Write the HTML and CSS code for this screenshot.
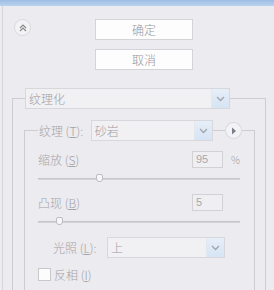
FILE: index.html
```html
<!DOCTYPE html>
<html>
<head>
<meta charset="utf-8">
<link rel="stylesheet" href="styles.css">
</head>
<body>
<div class="topbar"></div>
<div class="panel">
  <div class="head">
    <div class="circle up">
      <svg width="8" height="8" viewBox="0 0 8 8"><path d="M1 4 L4 1 L7 4 M1 7 L4 4 L7 7" fill="none" stroke="#8a8a8a" stroke-width="1.2"/></svg>
    </div>
    <div class="btns">
      <div class="btn">确定</div>
      <div class="btn">取消</div>
    </div>
  </div>

  <div class="group outer">
    <div class="ghead">
      <div class="seg segl"></div>
      <div class="select sel-main"><span class="val">纹理化</span><span class="arrow"><svg width="9" height="6" viewBox="0 0 9 6"><path d="M1 1 L4.5 4.5 L8 1" fill="none" stroke="#a0a4aa" stroke-width="1.3"/></svg></span></div>
      <div class="seg segr"></div>
    </div>
    <div class="gbody outer-body">
      <div class="group inner">
        <div class="ghead ihead">
          <div class="seg segl s-in"></div>
          <span class="lbl tex-lbl">纹理 (<u>T</u>):</span>
          <div class="select sel-tex"><span class="val">砂岩</span><span class="arrow"><svg width="9" height="6" viewBox="0 0 9 6"><path d="M1 1 L4.5 4.5 L8 1" fill="none" stroke="#a0a4aa" stroke-width="1.3"/></svg></span></div>
          <div class="seg s-mid"></div>
          <div class="circle play"><svg width="6" height="8" viewBox="0 0 6 8"><path d="M1 0.5 L5 4 L1 7.5 Z" fill="#7a7e88"/></svg></div>
          <div class="seg segr s-end"></div>
        </div>
        <div class="gbody inner-body">
          <div class="row">
            <span class="lbl">缩放 (<u>S</u>)</span>
            <span class="num">95</span>
            <span class="pct">%</span>
          </div>
          <div class="slider"><span class="thumb" style="left: 58px"></span></div>
          <div class="row">
            <span class="lbl">凸现 (<u>B</u>)</span>
            <span class="num">5</span>
          </div>
          <div class="slider"><span class="thumb" style="left: 18px"></span></div>
          <div class="row light-row">
            <span class="lbl">光照 (<u>L</u>):</span>
            <div class="select sel-light"><span class="val">上</span><span class="arrow"><svg width="9" height="6" viewBox="0 0 9 6"><path d="M1 1 L4.5 4.5 L8 1" fill="none" stroke="#a0a4aa" stroke-width="1.3"/></svg></span></div>
          </div>
          <div class="row check-row">
            <span class="box"></span>
            <span class="lbl">反相 (<u>I</u>)</span>
          </div>
        </div>
      </div>
    </div>
  </div>
</div>
</body>
</html>
```
FILE: styles.css
```css
* { box-sizing: border-box; }
html, body { margin: 0; padding: 0; }
body {
  width: 274px;
  height: 290px;
  overflow: hidden;
  background: #ecebef;
  font-family: "Noto Sans CJK SC", "Noto Sans", sans-serif;
  font-size: 12px;
  font-weight: 300;
  color: #a4a4a8;
}
u { text-decoration: underline; }
.topbar {
  height: 6px;
  background: linear-gradient(#9dbde6, #bcd3ee);
}
.panel {
  margin-left: 2px;
  border-left: 1px solid #d6d5da;
  height: 284px;
}
.head {
  display: flex;
  padding-top: 13px;
  height: 82px;
}
.circle {
  width: 17px;
  height: 17px;
  border-radius: 50%;
  background: #f3f3f6;
  border: 1px solid #d9d9de;
  display: flex;
  align-items: center;
  justify-content: center;
}
.circle.up { margin-left: 11px; }
.btns {
  margin-left: 64px;
  display: flex;
  flex-direction: column;
  gap: 9px;
}
.btn {
  width: 98px;
  height: 21px;
  background: #fdfdfe;
  border: 1px solid #d4d4d8;
  text-align: center;
  line-height: 19px;
  color: #96969a;
  font-size: 12px;
}
.group { display: flex; flex-direction: column; }
.outer { margin-left: 9px; width: 254px; }
.ghead { display: flex; align-items: center; height: 21px; }
.seg {
  align-self: flex-end;
  height: 11px;
  border-top: 1px solid #cdcdd1;
}
.segl { width: 13px; border-left: 1px solid #cdcdd1; }
.segr { flex: 1; border-right: 1px solid #cdcdd1; }
.select {
  height: 21px;
  display: flex;
  background: #f1f0f3;
  border: 1px solid #d8d8dc;
}
.select .val { flex: 1; padding-left: 3px; line-height: 19px; color: #a0a0a4; }
.select .arrow {
  width: 18px;
  background: linear-gradient(#e6eef8, #d6e4f4);
  border-left: 1px solid #e3e8ef;
  display: flex;
  align-items: center;
  justify-content: center;
}
.sel-main { width: 205px; }
.gbody {
  border-left: 1px solid #cdcdd1;
  border-right: 1px solid #cdcdd1;
}
.outer-body { padding: 11px 10px 0 11px; height: 190px; }
.inner { width: 231px; }
.s-in { width: 14px; }
.tex-lbl { margin-left: 1px; width: 52px; white-space: nowrap; }
.sel-tex { width: 123px; }
.s-mid { width: 12px; align-self: center; height: 1px; }
.s-end { width: 13px; flex: none; }
.inner-body { padding: 10px 0 0 13px; height: 160px; }
.row { display: flex; align-items: center; height: 17px; }
.row .lbl { width: 154px; white-space: nowrap; }
.num {
  width: 31px;
  height: 17px;
  border: 1px solid #d2d2d6;
  background: #efeef1;
  padding-left: 3px;
  line-height: 15px;
  font-size: 11px;
  color: #a8a8ac;
  font-family: "Liberation Sans", sans-serif;
}
.pct { margin-left: 8px; font-size: 10px; }
.slider {
  position: relative;
  width: 202px;
  height: 2px;
  margin: 10px 0 14px;
  background: #d4d4d8;
  border-top: 1px solid #c6c6ca;
}
.thumb {
  position: absolute;
  top: -5px;
  width: 7px;
  height: 8px;
  background: #f7f7f9;
  border: 1px solid #bdbdc1;
  border-radius: 2px 2px 3px 3px;
}
.light-row { margin-top: 5px; height: 21px; padding-left: 15px; }
.light-row .lbl { width: 54px; }
.sel-light { width: 118px; }
.check-row { margin-top: 9px; height: 14px; }
.box {
  width: 13px;
  height: 13px;
  background: #fcfcfd;
  border: 1px solid #c8c8cc;
  margin-right: 3px;
}
.check-row .lbl { width: auto; }
```
